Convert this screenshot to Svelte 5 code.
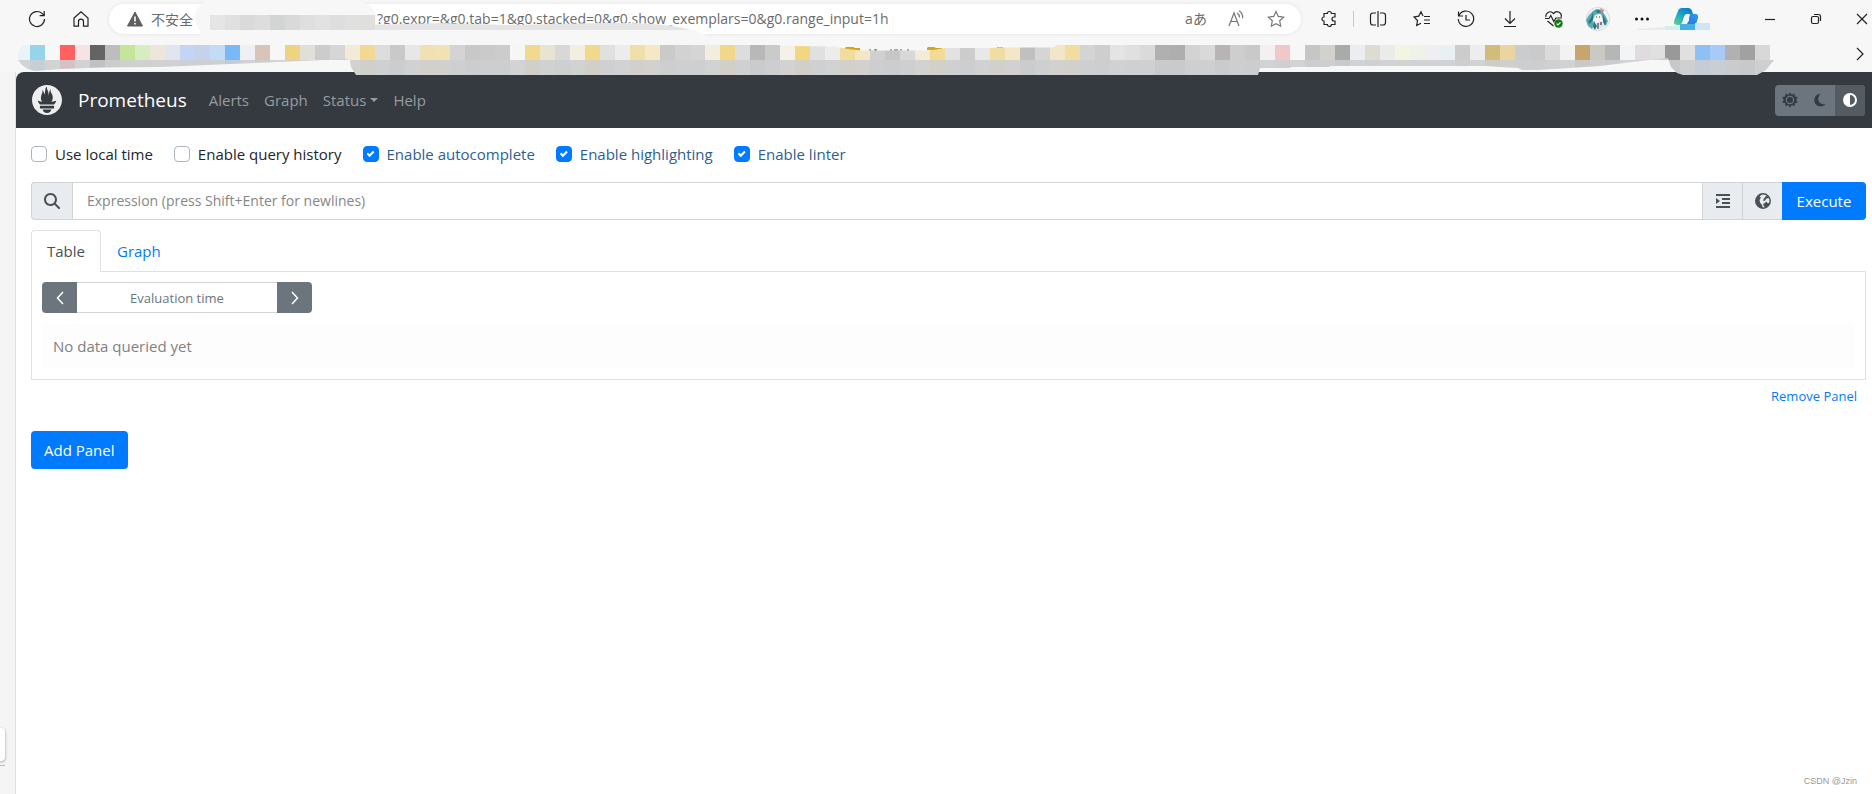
<script>
  let options = $state([
    { id: 'local-time', label: 'Use local time', checked: false },
    { id: 'query-history', label: 'Enable query history', checked: false },
    { id: 'autocomplete', label: 'Enable autocomplete', checked: true },
    { id: 'highlighting', label: 'Enable highlighting', checked: true },
    { id: 'linter', label: 'Enable linter', checked: true },
  ]);
  let url = $state('?g0.expr=&g0.tab=1&g0.stacked=0&g0.show_exemplars=0&g0.range_input=1h');
  let expr = $state('');
  let evalTime = $state('');
  let tab = $state('table');
  let theme = $state('auto');

  // Redacted bookmarks, one colour per 15px cell
  const cell = 15;
  const bookmarks = (
    'ebf3f6 95d4e9 f7f7f7 ff6161 f5e3e5 646464 bdbdbd c5e59a d9ecc1 eee6da e2e5ee c2d5f5 c6d2ea c3dcf6 7ab9f8 ' +
    'f0f0f4 d8c4b9 f7f7f7 eed480 e0dfda cccccd d6d6d6 f3ebd8 f2d993 dddddd c9c9c9 e7e7e8 f1e0b4 f1e2b3 d4d4d4 ' +
    'c8c8c8 cacaca cccccc f6f6f6 f1d98f e9e3d2 d8d8d9 f2eee0 f0d98b e0e0e0 ececec f0dfa9 f4e8c5 cacaca d2d2d2 ' +
    'd5d5d5 f2eedf f0d888 dddddd b8b8b8 cacaca f5f1e9 f1d780 e0e0e0 ececec f0dc9c f4e7c5 d0d0d0 c6c6c6 d8d8d8 ' +
    'f4ebd6 f2db94 e2e2e2 cccccc e8e8e8 f0dda2 f4e7c5 c0c0c0 d5d5d5 f2e6c9 f1dd9f d4d4d4 cecece e4e4e4 e0e0e0 ' +
    'dadadb b0b0b0 aeaeae d3d3d3 d9d9d9 b8b4b5 cecece c9c9c9 f1f1f1 f1c8ca f7f7f7 c6c6c6 d3d1ce a9abab ecedf0 ' +
    'dedbd3 eaecec f2f5df eff2e9 eeeef3 eaeff4 cccccc ededed d1bd7b ead4a0 cbcccd c9cac9 dadada f2f2f0 c6a56e ' +
    'ccc9c4 b6b6b6 f3f4f6 dfdbdf e0e0e0 999999 e0e0e0 8ec0f3 a6cbf7 b1b1b1 a1a1a1 d8d8d8'
  ).split(' ');
  const hostCells = ['e4e5e4', 'dfe0df', 'd9dad9', 'dcdddc', 'd3d5d4', 'd8d9d8', 'dedfde', 'e1e2e1', 'dddedd', 'e2e0df', 'dfdfde'];
</script>

<div class="browser">
  <header class="chrome">
    <div class="toolbar">
      <button class="tool" aria-label="Refresh">
        <svg width="18" height="18" viewBox="0 0 18 18"><path d="M16.5 9A7.5 7.5 0 1 1 14.3 3.7L16 5.4M16.2 1v4.6h-4.6" /></svg>
      </button>
      <button class="tool" aria-label="Home">
        <svg width="18" height="18" viewBox="0 0 18 18"><path d="M2 8 9 1.8 16 8v8.2h-4.5v-4.5a2.5 2.5 0 0 0-5 0v4.500H2z" /></svg>
      </button>
      <div class="address">
        <svg class="warning" width="16" height="16" viewBox="0 0 16 16"><path d="M8 1 15.500 15H.5z" fill="#5f5f5f" stroke="#5f5f5f" stroke-linejoin="round" /><path d="M8 5.500v5M8 12v1.500" stroke="#fff" stroke-width="1.600" /></svg>
        <span class="insecure">不安全</span>
        <input class="url" type="text" aria-label="Address" bind:value={url} />
        <button class="small-tool translate" aria-label="Translate">aあ</button>
        <button class="small-tool" aria-label="Read aloud">
          <svg width="18" height="18" viewBox="0 0 18 18"><path d="M2 16 7 3l5 13M3.800 11.500h6.500M10 3q2.500 1.500 2.500 4.500M12 .8q4 2.500 3.600 7.500" /></svg>
        </button>
        <button class="small-tool" aria-label="Add to favorites">
          <svg width="18" height="18" viewBox="0 0 18 18"><path d="m9 1.500 2.300 4.900 5.300.7-3.900 3.700 1 5.400L9 13.600l-4.700 2.600 1-5.400L1.400 7.100l5.300-.7z" /></svg>
        </button>
      </div>
      <div class="tools">
        <button class="tool" aria-label="Extensions">
          <svg width="18" height="18" viewBox="0 0 18 18"><path d="M5 3.500h2.400a2 2 0 0 1 4 0H15V7h-1a2 2 0 0 0 0 4h1v3.500h-3.600a2 2 0 0 1-4 0H4V11a2 2 0 0 1 0-4V3.500z" /></svg>
        </button>
        <span class="divider"></span>
        <button class="tool" aria-label="Split screen">
          <svg width="18" height="18" viewBox="0 0 18 18"><path d="M7 3H4Q1.500 3 1.500 5.500v7Q1.500 15 4 15h3M11 3h3q2.500 0 2.500 2.500v7Q16.500 15 14 15h-3M9 1v16" /></svg>
        </button>
        <button class="tool" aria-label="Favorites">
          <svg width="18" height="18" viewBox="0 0 18 18"><path d="M10 6 8 1.800 5.800 6.100 1 7l3.500 3.500-.8 5L8 13.200M11 6.500h6M11 10h6M11 13.500h6" /></svg>
        </button>
        <button class="tool" aria-label="History">
          <svg width="18" height="18" viewBox="0 0 18 18"><path d="M2 5.500A7.700 7.700 0 1 1 1.300 9M1.500 1.500v4.500H6M9 5v5h4" /></svg>
        </button>
        <button class="tool" aria-label="Downloads">
          <svg width="18" height="18" viewBox="0 0 18 18"><path d="M9 1v12M4 8.500 9 13.500l5-5M3 16.500h12" /></svg>
        </button>
        <button class="tool" aria-label="Browser essentials">
          <svg width="20" height="18" viewBox="0 0 20 18"><path d="M2 7C1 3.500 6-.5 9.500 3.500 13-.5 18.500 3 17 7M1 8.500h4l1.800-3 3 6 2-3.500H18M3.500 11 9.500 16" /><circle cx="14.500" cy="13.500" r="4.200" fill="#107c10" stroke="none" /><path d="m12.600 13.600 1.400 1.300 2.500-2.600" stroke="#fff" /></svg>
        </button>
        <button class="tool" aria-label="Profile">
          <svg width="24" height="24" viewBox="0 0 24 24">
            <circle cx="12" cy="12" r="11.500" fill="#f4f6f7" stroke="#ddd" />
            <path d="M7 4q5-4 9 0l3 4 3 6-2 5-3-6-2-6-6 1-2 5 1 5-2 4-4-3-2-6 3-5z" fill="#58aab0" stroke="none" />
            <path d="m7 5-2 6-3 4 2 2 3-5M8 14l-1 6 2 3 2-4M17 8l3 6-1 5-2-4zM9 4l3 2 3-1-2-2z" fill="#2b7684" stroke="none" />
            <path d="m9 8 5-1 2 4-1 4-4 1-2-3z" fill="#fdf1ee" stroke="none" />
            <path d="m12 15 4-1 2 4-2 4-3-1z" fill="#dfe5e8" stroke="none" />
            <path d="m14 1 4 2-1 3-2-2z" fill="#e37c9b" stroke="none" />
            <path d="M10 10h1m2 0h1M12 16v6M15 15v3" stroke="#34424a" />
          </svg>
        </button>
        <button class="tool" aria-label="Settings and more">
          <svg width="16" height="16" viewBox="0 0 16 16"><g fill="#111" stroke="none"><circle cx="2.500" cy="8" r="1.500" /><circle cx="8" cy="8" r="1.500" /><circle cx="13.500" cy="8" r="1.500" /></g></svg>
        </button>
        <button class="tool" aria-label="Copilot">
          <svg width="24" height="22" viewBox="0 0 24 22">
            <defs>
              <linearGradient id="copilot-a" x1="0" y1="1" x2=".7" y2="0"><stop offset="0" stop-color="#6fd08a" /><stop offset=".5" stop-color="#1fafc0" /><stop offset="1" stop-color="#0c7bd0" /></linearGradient>
              <linearGradient id="copilot-b" x1="0" y1="1" x2="1" y2="0"><stop offset="0" stop-color="#1a6fe6" /><stop offset=".6" stop-color="#2886ea" /><stop offset="1" stop-color="#2d9cf0" /></linearGradient>
            </defs>
            <path d="M4 3q1-3 4-3h6q3 0 4 3l1 3h-5q-3 0-4 3l-2 6q-1 2-3 2H3q-4 0-3-4z" fill="url(#copilot-a)" stroke="none" />
            <path d="M15 6h6q4 0 3 4l-2 6q-1 4-5 4H9q-2 0-3-3 3 0 4-3h3q2 0 2-2z" fill="url(#copilot-b)" stroke="none" />
            <path d="M14 6h2l-2 8q-1 3-4 3H8l2-8q1-3 4-3z" fill="#f7f7f7" stroke="none" />
          </svg>
        </button>
      </div>
      <div class="window-controls">
        <button aria-label="Minimize"><svg width="12" height="12" viewBox="0 0 12 12"><path d="M1 6.500h10" /></svg></button>
        <button aria-label="Restore"><svg width="12" height="12" viewBox="0 0 12 12"><rect x="1.500" y="3.500" width="7" height="7" rx="1.500" /><path d="M4 1.500h4.500q2 0 2 2V8" /></svg></button>
        <button aria-label="Close"><svg width="12" height="12" viewBox="0 0 12 12"><path d="m1 1 10 10M11 1 1 11" /></svg></button>
      </div>
    </div>
    <div class="bookmarks">
      <button aria-label="More bookmarks"><svg width="12" height="14" viewBox="0 0 12 14"><path d="m3 1 6 6-6 6" /></svg></button>
    </div>

    <svg class="redaction" width="1872" height="78" viewBox="0 0 1872 78">
      <defs>
        <clipPath id="upper"><path d="M22 45H778L790 46 833 46.500 848 49 860 50.500H930L945 48 990 48 1000 47.500H1053L1057 45H1770V60H18V52Z" /></clipPath>
        <clipPath id="lower"><path d="M18 60 22 65 28 69 35 71 60 69 100 67.500 160 67 230 64 300 61 345 59 350 60 351 67 356 75H1258L1260 68H1291V67H1330V66H1486L1500 67 1518 68 1522 70H1538L1600 66 1640 61 1668 58 1671 67 1677 73 1683 75H1757L1766 70 1774 60Z" /></clipPath>
      </defs>
      <path d="M195 14Q200 0 216 0H352Q372 2 376 14V24L440 25 470 24 510 26 600 24Q650 22 675 26 702 30 709 38H200V30Q194 24 195 14Z" fill="#f7f7f7" />
      {#each hostCells as color, i}
        <rect x={210 + i * cell} y="15" width={cell} height={cell} fill="#{color}" />
      {/each}
      <path d="M375 25 440 23 470 24 510 25 600 23Q665 22 690 30H375Z" fill="#e4e4e4" />
      <path d="M1637 29 1665 27V30H1637Z" fill="#e9eaea" />
      <rect x="1665" y="26" width="15" height="4" fill="#d2efe9" />
      <rect x="1680" y="24" width="15" height="6" fill="#49afe2" />
      <rect x="1695" y="23" width="15" height="7" fill="#d1e4f5" />
      <path d="M845 50v-2l1-1h7l2 1h5v3zM927 50v-2l1-1h6l2 1h6v3zM997 48v-1h6v1z" fill="#d2a51d" />
      <path d="M870 49v3m5-3v3m1-3v3m15-3v3m4-3v3m2-3v3m4-3v3m7-3v3" stroke="#555" />
      <g clip-path="url(#upper)">
        {#each bookmarks as color, i}
          <rect x={(i + 1) * cell} y="45" width={cell} height={cell} fill="#{color}" />
        {/each}
      </g>
      <g clip-path="url(#lower)">
        <rect x="15" y="58" width="1760" height="18" fill="#cdcfd1" />
        {#each bookmarks as color, i}
          <rect x={(i + 1) * cell} y="60" width={cell} height={cell} fill="#{color}" fill-opacity=".12" />
        {/each}
      </g>
    </svg>
  </header>

  <div class="body">
    <aside class="gutter"><div class="handle"></div><div class="handle-line"></div></aside>
    <div class="page">
      <nav class="navbar">
        <svg class="logo" width="30" height="30" viewBox="0 0 24 24"><path fill="#eee" d="M12 0C5.373 0 0 5.372 0 12c0 6.627 5.373 12 12 12s12-5.373 12-12c0-6.628-5.373-12-12-12zm0 22.460c-1.885 0-3.414-1.260-3.414-2.814h6.828c0 1.553-1.528 2.813-3.414 2.813zm5.640-3.745H6.360v-2.046h11.280v2.046zm-.04-3.098H6.391c-.037-.043-.075-.086-.111-.13-1.155-1.401-1.427-2.133-1.690-2.879-.005-.025 1.400.287 2.395.511 0 0 .513.119 1.262.255-.72-.843-1.147-1.915-1.147-3.010 0-2.406 1.845-4.508 1.180-6.207.648.053 1.340 1.367 1.387 3.422.689-.951.977-2.690.977-3.755 0-1.103.727-2.385 1.454-2.429-.648 1.069.168 1.984.894 4.256.272.854.237 2.290.447 3.201.070-1.892.395-4.652 1.595-5.605-.529 1.200.079 2.702.494 3.424.671 1.164 1.078 2.047 1.078 3.716a4.642 4.642 0 0 1-1.110 2.996c.792-.149 1.340-.283 1.340-.283l2.573-.502s-.374 1.538-1.810 3.019z" /></svg>
        <a class="brand" href="#home">Prometheus</a>
        <div class="links">
          <a href="#alerts">Alerts</a>
          <a href="#graph">Graph</a>
          <a class="dropdown" href="#status">Status</a>
          <a href="#help">Help</a>
        </div>
        <div class="themes">
          <button class:active={theme === 'light'} aria-label="Light theme" onclick={() => (theme = 'light')}>
            <svg width="16" height="16" viewBox="0 0 16 16"><path fill="#343a40" fill-rule="evenodd" d="m8 .5 1.800 2.200 2.700-1.200.3 2.900 2.900.6L14.300 8l1.400 2.500-2.900.8-.3 3-2.700-1.200L8 15.500l-1.800-2.400-2.700 1.200-.3-3-2.900-.8L1.700 8 .3 5l2.900-.6.3-2.900 2.700 1.200zM8 3.800a4.200 4.200 0 1 0 0 8.400 4.200 4.200 0 0 0 0-8.400z" /><circle cx="8" cy="8" r="3" fill="#343a40" /></svg>
          </button>
          <button class:active={theme === 'dark'} aria-label="Dark theme" onclick={() => (theme = 'dark')}>
            <svg width="14" height="14" viewBox="0 0 14 14"><path fill="#343a40" d="M8 .8A6.300 6.300 0 1 0 12.500 11C8 12 5 9 5.300 5.500 5.500 3.300 6.500 1.700 8 .8z" /></svg>
          </button>
          <button class:active={theme === 'auto'} aria-label="Browser theme" onclick={() => (theme = 'auto')}>
            <svg width="14" height="14" viewBox="0 0 14 14"><path fill="#fff" fill-rule="evenodd" d="M7 0a7 7 0 1 1 0 14A7 7 0 0 1 7 0zm0 2v10A5 5 0 0 0 7 2z" /></svg>
          </button>
        </div>
      </nav>

      <main>
        <div class="options">
          {#each options as option}
            <div class="option">
              <input type="checkbox" id={option.id} bind:checked={option.checked} />
              <label for={option.id}>{option.label}</label>
            </div>
          {/each}
        </div>

        <div class="expression">
          <label class="addon search" for="expr" aria-label="Expression">
            <svg width="16" height="16" viewBox="0 0 512 512"><path fill="#495057" d="M416 208c0 45.900-14.900 88.300-40 122.700L502.600 457.400c12.500 12.500 12.500 32.800 0 45.300s-32.800 12.500-45.300 0L330.700 376c-34.400 25.200-76.800 40-122.700 40C93.100 416 0 322.900 0 208S93.100 0 208 0S416 93.100 416 208zM208 352a144 144 0 1 0 0-288 144 144 0 1 0 0 288z" /></svg>
          </label>
          <input id="expr" type="text" placeholder="Expression (press Shift+Enter for newlines)" bind:value={expr} />
          <button class="addon" aria-label="Format expression">
            <svg width="14" height="16" viewBox="0 0 14 16"><path d="M0 2h14M6 6h8M6 10h8M0 14h14" stroke="#495057" stroke-width="2" /><path d="M0 5v6l4-3z" fill="#495057" /></svg>
          </button>
          <button class="addon" aria-label="Open metrics explorer">
            <svg width="16" height="16" viewBox="0 0 16 16"><circle cx="8" cy="8" r="7.200" fill="#e9ecef" stroke="#495057" stroke-width="1.500" /><path fill="#495057" d="M8 .8 6 2 4.500 4l1.500.5L4.500 7 5 9.500 7 12l1 3.200C3.500 15 .8 12 .8 8S4 .8 8 .8zM10.500 3.500l1.500-.8L14.500 5l-3 .5-2 2.500-1.500-.5 1-2zM8 11l2-1 1-1.500 1.500 1.500 2 0-1 2.500-2.500 2-2-1z" /></svg>
          </button>
          <button class="execute">Execute</button>
        </div>

        <div class="tabs">
          <button class:active={tab === 'table'} onclick={() => (tab = 'table')}>Table</button>
          <button class:active={tab === 'graph'} onclick={() => (tab = 'graph')}>Graph</button>
        </div>
        <section class="panel">
          <div class="time">
            <button aria-label="Decrease evaluation time"><svg width="8" height="14" viewBox="0 0 8 14"><path d="M7 1 1.500 7 7 13" /></svg></button>
            <input type="text" aria-label="Evaluation time" placeholder="Evaluation time" bind:value={evalTime} />
            <button aria-label="Increase evaluation time"><svg width="8" height="14" viewBox="0 0 8 14"><path d="M1 1 6.500 7 1 13" /></svg></button>
          </div>
          <div class="notice">No data queried yet</div>
        </section>
        <div class="panel-footer"><button class="remove">Remove Panel</button></div>
        <button class="add">Add Panel</button>
      </main>
      <footer>CSDN @Jzin</footer>
    </div>
  </div>
</div>

<style>
  :global(body) {
    margin: 0;
    overflow-x: hidden;
  }
  .browser {
    display: flex;
    flex-direction: column;
    min-height: 100vh;
    overflow: hidden;
    background: #f7f7f7;
    color: #212529;
    font: 15px/24px 'Open Sans', 'Noto Sans CJK SC', sans-serif;
  }
  .browser * {
    box-sizing: border-box;
  }
  button,
  input {
    margin: 0;
    padding: 0;
    border: 0;
    background: none;
    color: inherit;
    font: inherit;
  }
  button {
    display: flex;
    align-items: center;
    justify-content: center;
    cursor: pointer;
  }
  a {
    text-decoration: none;
  }
  svg {
    flex: none;
  }

  /* Browser chrome */
  .chrome {
    position: relative;
    height: 72px;
  }
  .chrome button svg {
    fill: none;
    stroke: #222;
    stroke-width: 1.2;
  }
  .redaction {
    position: absolute;
    top: 0;
    left: 0;
    z-index: 1;
    pointer-events: none;
  }
  .toolbar {
    display: flex;
    align-items: center;
    height: 38px;
    padding-left: 25px;
  }
  .tool {
    flex: none;
    width: 24px;
    height: 24px;
  }
  .tool + .tool {
    margin-left: 20px;
  }
  .address {
    display: flex;
    align-items: center;
    flex: 1;
    min-width: 0;
    height: 30px;
    margin: 0 16px;
    padding: 0 12px 0 18px;
    border-radius: 15px;
    background: #fff;
    box-shadow: 0 0 4px #e4e4e4;
    color: #6b6b6b;
    font-size: 14px;
  }
  .insecure {
    flex: none;
    margin-left: 8px;
    font-family: 'Noto Sans CJK SC', sans-serif;
  }
  .url {
    flex: 1;
    min-width: 0;
    height: 24px;
    padding-left: 184px;
  }
  .small-tool {
    flex: none;
    width: 26px;
    height: 24px;
    margin-left: 14px;
  }
  .address .small-tool svg {
    stroke: #767676;
  }
  .translate {
    line-height: 18px;
  }
  .tools {
    display: flex;
    align-items: center;
    gap: 20px;
  }
  .tools .tool {
    margin: 0;
  }
  .divider {
    width: 1px;
    height: 16px;
    margin: 0 -8px;
    background: #c8c8c8;
  }
  .window-controls {
    display: flex;
    gap: 26px;
    margin-left: 62px;
  }
  .window-controls button {
    width: 20px;
    height: 24px;
  }
  .bookmarks {
    display: flex;
    align-items: center;
    justify-content: flex-end;
    height: 32px;
    padding-right: 6px;
  }

  /* Page */
  .body {
    display: flex;
    flex: 1;
  }
  .gutter {
    display: flex;
    flex-direction: column;
    justify-content: flex-end;
    width: 16px;
    padding-bottom: 28px;
    border-right: 1px solid #e0e0e0;
    background: #f5f5f5;
  }
  .handle {
    width: 5px;
    height: 33px;
    border-radius: 0 4px 4px 0;
    background: #fff;
    box-shadow: 0 1px 3px #999;
  }
  .handle-line {
    width: 5px;
    height: 1px;
    margin-top: 4px;
    background: #bbb;
  }
  .page {
    display: flex;
    flex-direction: column;
    flex: 1;
    min-width: 0;
    border-top-left-radius: 8px;
    background: #fff;
  }
  .navbar {
    display: flex;
    align-items: center;
    height: 56px;
    padding: 0 7px 0 16px;
    border-top-left-radius: 8px;
    background: #343a40;
  }
  .brand {
    margin-left: 16px;
    color: #fff;
    font-size: 19px;
  }
  .links {
    display: flex;
    gap: 15px;
    margin-left: 22px;
  }
  .links a {
    color: #999c9f;
  }
  .dropdown::after {
    content: '';
    display: inline-block;
    margin-left: 4px;
    border: 4px solid transparent;
    border-top-color: currentColor;
    border-bottom: 0;
    vertical-align: 4px;
  }
  .themes {
    display: flex;
    margin-left: auto;
    border-radius: 4px;
    overflow: hidden;
    background: #6c757d;
  }
  .themes button {
    width: 30px;
    height: 31px;
  }
  .themes .active {
    background: #545b62;
  }
  main {
    padding: 14px 6px 0 15px;
  }
  .options {
    display: flex;
    gap: 21px;
  }
  .option {
    display: flex;
    align-items: center;
    gap: 8px;
  }
  .option input {
    position: relative;
    width: 16px;
    height: 16px;
    border: 1px solid #adb5bd;
    border-radius: 4px;
    appearance: none;
  }
  .option input:checked {
    border-color: #007bff;
    background: #007bff;
  }
  .option input:checked::after {
    content: '';
    position: absolute;
    inset: 3px;
    background: #fff;
    clip-path: polygon(0 50%, 18% 32%, 38% 52%, 80% 8%, 100% 27%, 38% 90%);
  }
  .option input:checked + label {
    color: #2d5f92;
  }
  .expression {
    display: flex;
    height: 38px;
    margin-top: 16px;
  }
  .addon {
    display: flex;
    align-items: center;
    justify-content: center;
    width: 40px;
    border: 1px solid #ced4da;
    border-right: 0;
    background: #e9ecef;
  }
  .search {
    width: 41px;
    border-radius: 4px 0 0 4px;
  }
  .expression input {
    flex: 1;
    min-width: 0;
    padding: 0 14px;
    border: 1px solid #ced4da;
    border-right: 0;
    font-size: 14px;
  }
  input::placeholder {
    color: #868686;
    opacity: 1;
  }
  .execute {
    width: 84px;
    border-radius: 0 4px 4px 0;
    background: #007bff;
    color: #fff;
  }
  .tabs {
    display: flex;
    margin-top: 10px;
  }
  .tabs button {
    height: 42px;
    padding: 0 15px 2px;
    border: 1px solid transparent;
    border-bottom: 0;
    border-radius: 4px 4px 0 0;
    color: #007bff;
  }
  .tabs .active {
    z-index: 1;
    border-color: #dee2e6;
    background: #fff;
    color: #495057;
  }
  .panel {
    margin-top: -1px;
    padding: 10px;
    border: 1px solid #dee2e6;
  }
  .time {
    display: flex;
    width: 270px;
    height: 31px;
    font-size: 13px;
  }
  .time button {
    width: 35px;
    border-radius: 4px 0 0 4px;
    background: #6c757d;
  }
  .time button:last-child {
    border-radius: 0 4px 4px 0;
  }
  .time svg {
    fill: none;
    stroke: #fff;
    stroke-width: 1.5;
  }
  .time input {
    flex: 1;
    min-width: 0;
    border: 1px solid #ced4da;
    border-width: 1px 0;
    text-align: center;
  }
  .time input::placeholder {
    color: #6c757d;
  }
  .notice {
    margin-top: 10px;
    padding: 11px;
    border-radius: 4px;
    background: #fdfdfd;
    color: #818182;
  }
  .panel-footer {
    display: flex;
    justify-content: flex-end;
    padding: 4px 9px;
  }
  .remove {
    color: #007bff;
    font-size: 13px;
  }
  .add {
    height: 38px;
    margin-top: 19px;
    padding: 0 13px;
    border-radius: 4px;
    background: #007bff;
    color: #fff;
  }
  footer {
    margin-top: auto;
    padding: 0 15px 7px;
    color: #999;
    font: 9px/12px 'Liberation Sans', sans-serif;
    text-align: right;
  }
</style>
